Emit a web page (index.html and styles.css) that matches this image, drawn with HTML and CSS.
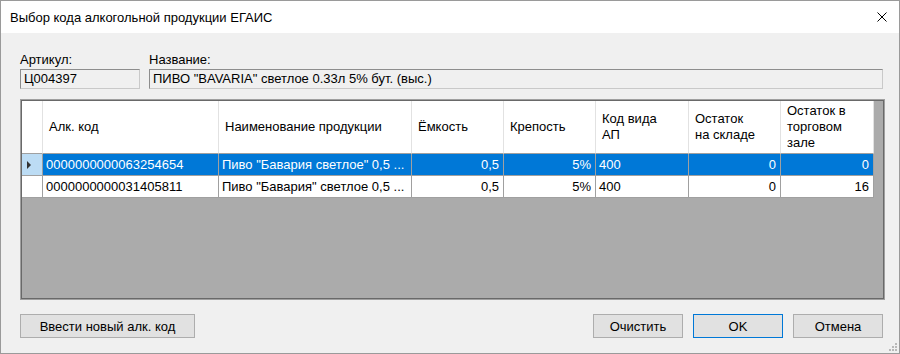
FILE: index.html
```html
<!DOCTYPE html>
<html lang="ru">
<head>
  <meta charset="UTF-8" />
  <title>Выбор кода алкогольной продукции ЕГАИС</title>
  <link rel="stylesheet" href="styles.css">
</head>
<body>

  <div class="window">
    <div class="titlebar">
      <span class="title">Выбор кода алкогольной продукции ЕГАИС</span>
      <svg class="close" width="10" height="10" viewBox="0 0 10 10">
        <path d="M0.5 0.5 L9.5 9.5 M9.5 0.5 L0.5 9.5" stroke="#000" stroke-width="1" fill="none" />
      </svg>
    </div>

    <div class="content">
      <div class="fields">
        <div class="field field-sku">
          <label>Артикул:</label>
          <div class="textbox">Ц004397</div>
        </div>
        <div class="field field-name">
          <label>Название:</label>
          <div class="textbox">ПИВО "BAVARIA" светлое 0.33л 5% бут. (выс.)</div>
        </div>
      </div>

      <div class="grid">
        <div class="grid-head">
          <div class="rh"></div>
          <div class="hc">Алк. код</div>
          <div class="hc">Наименование продукции</div>
          <div class="hc">Ёмкость</div>
          <div class="hc">Крепость</div>
          <div class="hc">Код вида<br>АП</div>
          <div class="hc">Остаток<br>на складе</div>
          <div class="hc">Остаток в<br>торговом<br>зале</div>
        </div>

        <div class="grid-row selected">
          <div class="rh"><span class="arrow"></span></div>
          <div class="c">0000000000063254654</div>
          <div class="c">Пиво "Бавария светлое" 0,5 ...</div>
          <div class="c num">0,5</div>
          <div class="c num">5%</div>
          <div class="c">400</div>
          <div class="c num">0</div>
          <div class="c num">0</div>
        </div>

        <div class="grid-row">
          <div class="rh"></div>
          <div class="c">0000000000031405811</div>
          <div class="c">Пиво "Бавария" светлое 0,5 ...</div>
          <div class="c num">0,5</div>
          <div class="c num">5%</div>
          <div class="c">400</div>
          <div class="c num">0</div>
          <div class="c num">16</div>
        </div>
      </div>

      <div class="buttons">
        <button class="btn btn-wide">Ввести новый алк. код</button>
        <div class="spacer"></div>
        <button class="btn">Очистить</button>
        <button class="btn btn-default">OK</button>
        <button class="btn">Отмена</button>
      </div>
    </div>

    <svg class="grip" width="12" height="12" viewBox="0 0 12 12">
      <rect x="9" y="3" width="2" height="2" fill="#b8b8b8" />
      <rect x="6" y="6" width="2" height="2" fill="#b8b8b8" />
      <rect x="9" y="6" width="2" height="2" fill="#b8b8b8" />
      <rect x="3" y="9" width="2" height="2" fill="#b8b8b8" />
      <rect x="6" y="9" width="2" height="2" fill="#b8b8b8" />
      <rect x="9" y="9" width="2" height="2" fill="#b8b8b8" />
    </svg>
  </div>

</body>
</html>
```

FILE: styles.css
```css
* {
  box-sizing: border-box;
}

body {
  margin: 0;
  font-family: "Liberation Sans", Arial, sans-serif;
  font-size: 13px;
  color: #000;
  background: #f0f0f0;
}

.window {
  position: relative;
  width: 900px;
  height: 354px;
  border: 1px solid #9a9a9a;
  background: #f0f0f0;
  display: flex;
  flex-direction: column;
}

.titlebar {
  height: 32px;
  background: #fff;
  display: flex;
  align-items: center;
  padding: 0 12px 0 9px;
}

.title {
  flex: 1;
  font-size: 13px;
}

.close {
  display: block;
}

.content {
  flex: 1;
  padding: 19px 14px 0 19px;
  display: flex;
  flex-direction: column;
}

/* fields on top */

.fields {
  display: flex;
  gap: 9px;
}

.field label {
  display: block;
  height: 15px;
  line-height: 15px;
  margin-bottom: 2px;
}

.field-sku {
  width: 120px;
}

.field-name {
  flex: 1;
  margin-right: 2px;
}

.textbox {
  height: 20px;
  line-height: 18px;
  padding: 0 3px;
  border: 1px solid;
  border-color: #8d8d8d #c9c9c9 #c9c9c9 #8d8d8d;
  background: #f0f0f0;
  white-space: nowrap;
  overflow: hidden;
}

/* data grid */

.grid {
  margin-top: 10px;
  height: 201px;
  background: #ababab;
  border: 1px solid #a0a0a0;
  box-shadow: inset 0 0 0 1px #696969;
  padding: 1px;
  overflow: hidden;
}

.grid-head,
.grid-row {
  display: grid;
  grid-template-columns: 21px 176px 193px 92px 92px 93px 92px 93px;
  width: 852px;
}

.grid-head {
  height: 53px;
  background: #fff;
}

.grid-head .rh,
.hc {
  border-right: 1px solid #e2e2e2;
  border-bottom: 1px solid #a0a0a0;
}

.hc {
  display: flex;
  align-items: center;
  padding: 0 6px;
  line-height: 16px;
}

.grid-row {
  height: 22px;
  background: #fff;
}

.grid-row .rh,
.c {
  border-right: 1px solid #a0a0a0;
  border-bottom: 1px solid #a0a0a0;
}

.c {
  line-height: 21px;
  padding: 0 4px 0 3px;
  white-space: nowrap;
  overflow: hidden;
}

.c.num {
  text-align: right;
}

.grid-row.selected .c {
  background: #0078d7;
  color: #fff;
}

.grid-row.selected .rh {
  background: #bcdcf4;
  display: flex;
  align-items: center;
  padding-left: 5px;
}

.arrow {
  width: 0;
  height: 0;
  border-top: 4px solid transparent;
  border-bottom: 4px solid transparent;
  border-left: 4px solid #333;
}

/* bottom buttons */

.buttons {
  display: flex;
  gap: 10px;
  margin-top: 14px;
  margin-right: 2px;
}

.spacer {
  flex: 1;
}

.btn {
  width: 90px;
  height: 24px;
  padding: 0;
  font-family: inherit;
  font-size: 13px;
  color: #000;
  background: #e1e1e1;
  border: 1px solid #adadad;
  border-radius: 0;
}

.btn-wide {
  width: 175px;
}

.btn-default {
  border-color: #0078d7;
}

.grip {
  position: absolute;
  right: 1px;
  bottom: 1px;
}
```
